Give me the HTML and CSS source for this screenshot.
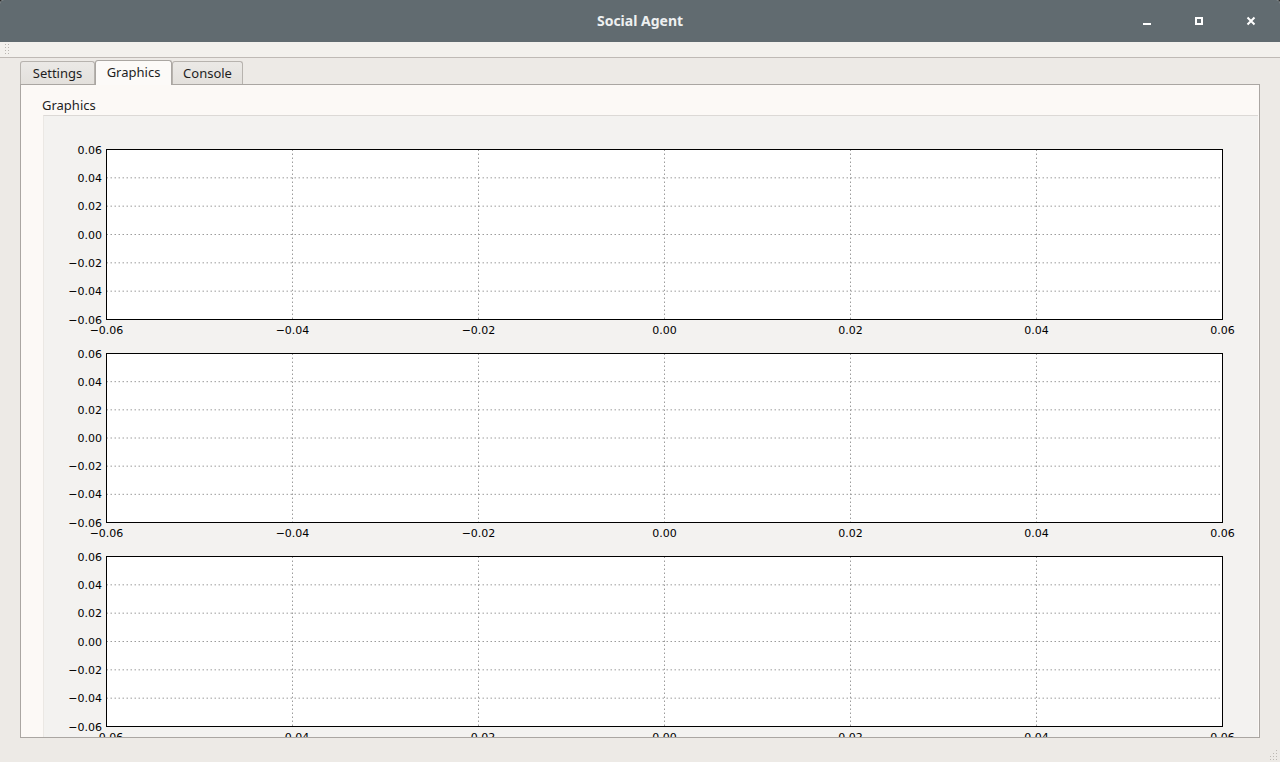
FILE: index.html
```html
<!DOCTYPE html>
<html lang="en">
<head>
<meta charset="utf-8">
<title>Social Agent</title>
<link rel="stylesheet" href="styles.css">
</head>
<body>
<div class="window">
  <header class="titlebar">
    <div class="title-spacer"></div>
    <div class="title">Social Agent</div>
    <div class="controls">
      <span class="ctl"><svg width="10" height="10" viewBox="0 0 10 10"><rect x="1" y="7" width="8" height="2" fill="#fff"/></svg></span>
      <span class="ctl"><svg width="10" height="10" viewBox="0 0 10 10"><rect x="2" y="2" width="6" height="6" fill="none" stroke="#fff" stroke-width="2"/></svg></span>
      <span class="ctl"><svg width="10" height="10" viewBox="0 0 10 10"><path d="M1.5 1.5 L8.5 8.5 M8.5 1.5 L1.5 8.5" stroke="#fff" stroke-width="2"/></svg></span>
    </div>
  </header>
  <div class="toolbar"><span class="handle"></span></div>
  <main class="content">
    <nav class="tabs">
      <div class="tab tab-settings">Settings</div>
      <div class="tab tab-graphics active">Graphics</div>
      <div class="tab tab-console">Console</div>
    </nav>
    <section class="pane">
      <div class="group-title">Graphics</div>
      <div class="group-frame">
        <svg class="figure" width="1214" height="621" viewBox="44 116 1214 621" font-family="DejaVu Sans, sans-serif" font-size="11">
          <g class="axes">
            <rect x="106.5" y="149.5" width="1116" height="170" fill="#fff"/>
            <path class="grid" d="M106.5 177.83H1222.5M106.5 206.17H1222.5M106.5 234.5H1222.5M106.5 262.83H1222.5M106.5 291.17H1222.5M292.5 149.5V319.5M478.5 149.5V319.5M664.5 149.5V319.5M850.5 149.5V319.5M1036.5 149.5V319.5"/>
            <rect x="106.5" y="149.5" width="1116" height="170" fill="none" stroke="#000" stroke-width="1"/>
            <g text-anchor="end">
              <text x="102" y="153.5">0.06</text>
              <text x="102" y="181.8">0.04</text>
              <text x="102" y="210.2">0.02</text>
              <text x="102" y="238.5">0.00</text>
              <text x="102" y="266.8">−0.02</text>
              <text x="102" y="295.2">−0.04</text>
              <text x="102" y="323.5">−0.06</text>
            </g>
            <g text-anchor="middle">
              <text x="106.5" y="333.5">−0.06</text>
              <text x="292.5" y="333.5">−0.04</text>
              <text x="478.5" y="333.5">−0.02</text>
              <text x="664.5" y="333.5">0.00</text>
              <text x="850.5" y="333.5">0.02</text>
              <text x="1036.5" y="333.5">0.04</text>
              <text x="1222.5" y="333.5">0.06</text>
            </g>
          </g>
          <g class="axes" transform="translate(0 204)">
            <rect x="106.5" y="149.5" width="1116" height="169" fill="#fff"/>
            <path class="grid" d="M106.5 177.67H1222.5M106.5 205.83H1222.5M106.5 234H1222.5M106.5 262.17H1222.5M106.5 290.33H1222.5M292.5 149.5V318.5M478.5 149.5V318.5M664.5 149.5V318.5M850.5 149.5V318.5M1036.5 149.5V318.5"/>
            <rect x="106.5" y="149.5" width="1116" height="169" fill="none" stroke="#000" stroke-width="1"/>
            <g text-anchor="end">
              <text x="102" y="153.5">0.06</text>
              <text x="102" y="181.7">0.04</text>
              <text x="102" y="209.8">0.02</text>
              <text x="102" y="238">0.00</text>
              <text x="102" y="266.2">−0.02</text>
              <text x="102" y="294.3">−0.04</text>
              <text x="102" y="322.5">−0.06</text>
            </g>
            <g text-anchor="middle">
              <text x="106.5" y="332.5">−0.06</text>
              <text x="292.5" y="332.5">−0.04</text>
              <text x="478.5" y="332.5">−0.02</text>
              <text x="664.5" y="332.5">0.00</text>
              <text x="850.5" y="332.5">0.02</text>
              <text x="1036.5" y="332.5">0.04</text>
              <text x="1222.5" y="332.5">0.06</text>
            </g>
          </g>
          <g class="axes" transform="translate(0 407)">
            <rect x="106.5" y="149.5" width="1116" height="170" fill="#fff"/>
            <path class="grid" d="M106.5 177.83H1222.5M106.5 206.17H1222.5M106.5 234.5H1222.5M106.5 262.83H1222.5M106.5 291.17H1222.5M292.5 149.5V319.5M478.5 149.5V319.5M664.5 149.5V319.5M850.5 149.5V319.5M1036.5 149.5V319.5"/>
            <rect x="106.5" y="149.5" width="1116" height="170" fill="none" stroke="#000" stroke-width="1"/>
            <g text-anchor="end">
              <text x="102" y="153.5">0.06</text>
              <text x="102" y="181.8">0.04</text>
              <text x="102" y="210.2">0.02</text>
              <text x="102" y="238.5">0.00</text>
              <text x="102" y="266.8">−0.02</text>
              <text x="102" y="295.2">−0.04</text>
              <text x="102" y="323.5">−0.06</text>
            </g>
            <g text-anchor="middle">
              <text x="106.5" y="333.5">−0.06</text>
              <text x="292.5" y="333.5">−0.04</text>
              <text x="478.5" y="333.5">−0.02</text>
              <text x="664.5" y="333.5">0.00</text>
              <text x="850.5" y="333.5">0.02</text>
              <text x="1036.5" y="333.5">0.04</text>
              <text x="1222.5" y="333.5">0.06</text>
            </g>
          </g>
        </svg>
      </div>
    </section>
  </main>
  <footer class="statusbar">
    <svg class="grip" width="10" height="10" viewBox="0 0 10 10">
      <g fill="#bcb8b3">
        <rect x="8" y="0" width="1" height="1"/>
        <rect x="5" y="3" width="1" height="1"/><rect x="8" y="3" width="1" height="1"/>
        <rect x="2" y="6" width="1" height="1"/><rect x="5" y="6" width="1" height="1"/><rect x="8" y="6" width="1" height="1"/>
        <rect x="2" y="9" width="1" height="1"/><rect x="5" y="9" width="1" height="1"/><rect x="8" y="9" width="1" height="1"/>
      </g>
    </svg>
  </footer>
</div>
</body>
</html>
```

FILE: styles.css
```css
html, body {
  margin: 0;
  padding: 0;
  background: #2b2b2b;
}

body {
  width: 1280px;
  height: 762px;
  overflow: hidden;
  font-family: "Noto Sans", "DejaVu Sans", sans-serif;
}

.window {
  width: 1280px;
  height: 762px;
  display: flex;
  flex-direction: column;
  background: #edeae6;
  border-radius: 4px 4px 0 0;
  overflow: hidden;
}

.titlebar {
  height: 42px;
  flex: none;
  display: grid;
  grid-template-columns: 1fr auto 1fr;
  align-items: center;
  background: #616b70;
  color: #eef0f0;
}

.title {
  font-weight: 700;
  font-size: 14px;
  line-height: 42px;
}

.controls {
  display: flex;
  justify-content: flex-end;
  height: 42px;
  padding-right: 3px;
}

.ctl {
  width: 52px;
  height: 42px;
  display: flex;
  align-items: center;
  justify-content: center;
}

.ctl svg {
  display: block;
}

.toolbar {
  height: 15px;
  flex: none;
  background: #f3f1ed;
  border-bottom: 1px solid #bfbab5;
  display: flex;
  align-items: center;
  padding-left: 4px;
}

.handle {
  width: 5px;
  height: 13px;
  background-image: radial-gradient(circle, #b9b5b0 0.6px, transparent 0.8px);
  background-size: 3px 3px;
}

.content {
  flex: 1;
  display: flex;
  flex-direction: column;
  padding: 2px 0 0 20px;
  min-height: 0;
}

.tabs {
  display: flex;
  align-items: flex-end;
  height: 24px;
  flex: none;
}

.tab {
  box-sizing: border-box;
  height: 23px;
  border: 1px solid #b7b3ae;
  border-bottom: none;
  border-radius: 3px 3px 0 0;
  background: linear-gradient(#ebe9e6, #e3e0dc);
  font-size: 13px;
  color: #1e1e1e;
  text-align: center;
  line-height: 23px;
}

.tab-settings { width: 75px; }
.tab-graphics { width: 77px; }
.tab-console { width: 71px; }

.tab.active {
  height: 25px;
  margin-bottom: -1px;
  position: relative;
  z-index: 1;
  background: #fcfaf8;
  border-color: #aaa6a2;
  line-height: 23px;
}

.pane {
  box-sizing: border-box;
  width: 1240px;
  height: 654px;
  border: 1px solid #aaa6a2;
  background: #fcf9f6;
  display: flex;
  flex-direction: column;
  padding: 0 1px 0 22px;
  overflow: hidden;
}

.group-title {
  flex: none;
  height: 30px;
  box-sizing: border-box;
  padding-top: 11px;
  line-height: 18px;
  font-size: 13px;
  color: #1e1e1e;
  margin-left: -1px;
}

.group-frame {
  flex: 1;
  min-height: 0;
  border-top: 1px solid #dcd9d6;
  border-left: 1px solid #ebe8e4;
  background: #f3f2f0;
  overflow: hidden;
}

.figure {
  display: block;
}

.figure text {
  fill: #000;
}

.grid {
  fill: none;
  stroke: #9c9c9c;
  stroke-width: 1;
  stroke-dasharray: 1.5 2.5;
}

.statusbar {
  height: 24px;
  flex: none;
  display: flex;
  justify-content: flex-end;
  align-items: flex-end;
  padding: 0 2px 2px 0;
  box-sizing: border-box;
}

.grip {
  display: block;
}
```
